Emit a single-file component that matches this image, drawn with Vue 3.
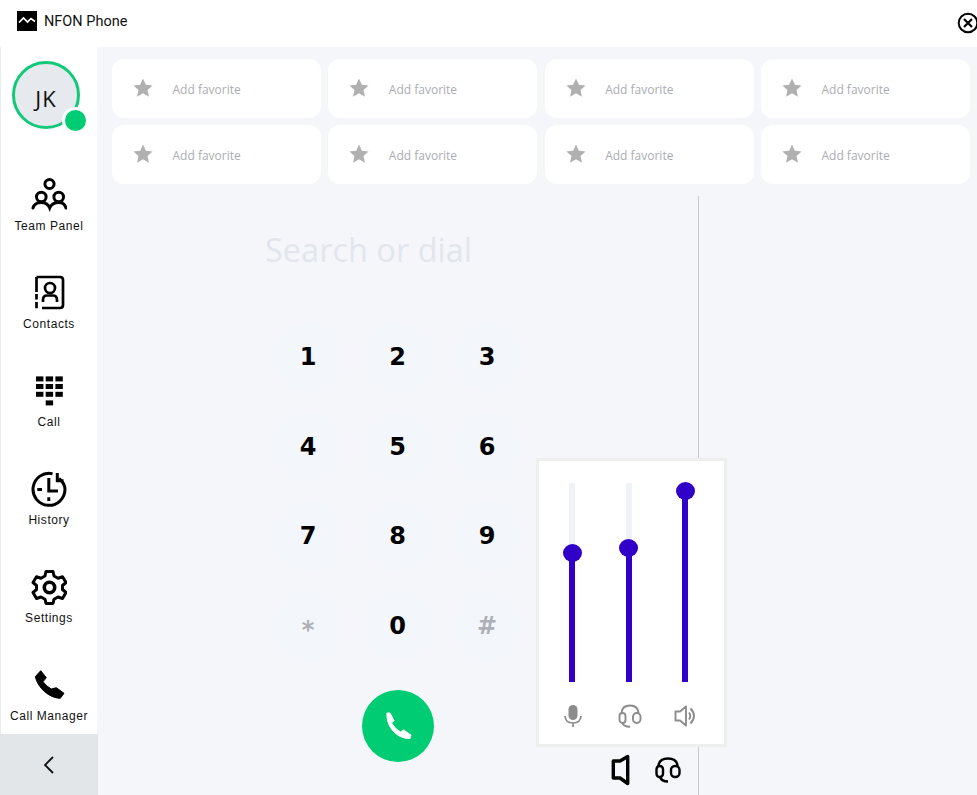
<script setup>
const favorites = Array.from({ length: 8 }, (_, i) => i)
const navItems = ['Team Panel', 'Contacts', 'Call', 'History', 'Settings', 'Call Manager']
const keys = [
  { k: '1' }, { k: '2' }, { k: '3' },
  { k: '4' }, { k: '5' }, { k: '6' },
  { k: '7' }, { k: '8' }, { k: '9' },
  { k: '*', muted: true, low: true }, { k: '0' }, { k: '#', muted: true }
]
const sliders = [
  { id: 'mic', fill: 129 },
  { id: 'head', fill: 134 },
  { id: 'spk', fill: 191 }
]
</script>

<template>
  <div class="app">
    <header class="titlebar">
      <svg class="logo" viewBox="0 0 20 20">
        <rect width="20" height="20" fill="#000" />
        <path d="M2 11.5 L6.5 7 L10.5 11 L14 7.5 L18 10.5" fill="none" stroke="#fff" stroke-width="1.7" />
      </svg>
      <span class="title">NFON Phone</span>
      <svg class="close" viewBox="0 0 22 22">
        <circle cx="11" cy="11" r="9.3" fill="none" stroke="#000" stroke-width="2" />
        <path d="M7 7 L15 15 M15 7 L7 15" stroke="#000" stroke-width="2.2" />
      </svg>
    </header>

    <div class="body">
      <aside class="sidebar">
        <div class="nav-top">
          <div class="avatar">
            <span>JK</span>
            <i class="status"></i>
          </div>
          <nav class="nav">
            <div v-for="(item, i) in navItems" :key="item" class="nav-item">
              <svg class="nav-icon" viewBox="0 0 36 36" fill="none" stroke="#000" stroke-width="3">
                <template v-if="i === 0">
                  <circle cx="18.5" cy="7" r="4.6" />
                  <circle cx="10.3" cy="20" r="4.8" />
                  <circle cx="27.7" cy="20" r="4.8" />
                  <path d="M2 31 Q3.5 25.5 10.3 25.5 Q16.5 25.5 18.7 31 Q21 25.5 27.7 25.5 Q33.5 25.5 35 31" stroke-linecap="round" />
                </template>
                <template v-else-if="i === 1">
                  <path d="M5.5 2 H29 Q32 2 32 5 V30 Q32 33 29 33 H11" stroke-width="2.7" />
                  <path d="M5.5 2 V17 M5.5 19 V24.5 M5.5 27 V33.3" stroke-width="2.7" />
                  <circle cx="19" cy="13" r="5" stroke-width="2.7" />
                  <path d="M12 27 V25 Q12 20.5 16 20.5 H22 Q26 20.5 26 25 V27" stroke-width="2.7" />
                </template>
                <template v-else-if="i === 2">
                  <g fill="#000" stroke="none">
                    <rect x="5" y="3.4" width="7.4" height="5" /><rect x="14.7" y="3.4" width="7.4" height="5" /><rect x="24.4" y="3.4" width="7.4" height="5" />
                    <rect x="5" y="11" width="7.4" height="5" /><rect x="14.7" y="11" width="7.4" height="5" /><rect x="24.4" y="11" width="7.4" height="5" />
                    <rect x="5" y="18.8" width="7.4" height="5" /><rect x="14.7" y="18.8" width="7.4" height="5" /><rect x="24.4" y="18.8" width="7.4" height="5" />
                    <rect x="14.7" y="27.4" width="7.4" height="5" />
                  </g>
                </template>
                <template v-else-if="i === 3">
                  <path d="M21.5 2.7 A16 16 0 1 0 34 18.3 Q34 12.5 28 7.5" />
                  <path d="M17.8 7 V20 H27" />
                  <path d="M6.3 18.5 H11 M17.8 26.3 V30" />
                  <path d="M26.3 2 V9.7 H32.5" />
                </template>
                <template v-else-if="i === 4">
                  <path d="M15 2.5 H22 L23 7 L27 9.2 L31.5 7.8 L35 13.5 L31.5 16.5 V20.5 L35 23.5 L31.5 29.5 L27 28 L23 30.2 L22 34.5 H15 L14 30.2 L10 28 L5.5 29.5 L2 23.5 L5.5 20.5 V16.5 L2 13.5 L5.5 7.8 L10 9.2 L14 7 Z" stroke-linejoin="round" />
                  <circle cx="18.5" cy="18.5" r="5.2" stroke-width="3.6" />
                </template>
                <template v-else>
                  <path fill="#000" stroke="#000" stroke-width="1" stroke-linejoin="round" d="M9.7 3.7 L15.3 10.7 L12 14.7 Q15.5 19.5 20.3 22 L25.3 20.7 L33 26.3 L29.3 31.3 C18 31 7 21 4.3 9.7 Z" />
                </template>
              </svg>
              <span class="nav-label">{{ item }}</span>
            </div>
          </nav>
        </div>
        <div class="collapse">
          <svg viewBox="0 0 12 20" width="12" height="20" fill="none" stroke="#111" stroke-width="1.8">
            <path d="M10 2 L2 10 L10 18" />
          </svg>
        </div>
      </aside>

      <main class="main">
        <section class="favorites">
          <div v-for="f in favorites" :key="f" class="fav">
            <svg class="star" viewBox="0 0 20 20">
              <path fill="#b0b0b0" d="M10 0.5 L12.8 6.8 L19.6 7.4 L14.5 12 L16 18.8 L10 15.3 L4 18.8 L5.5 12 L0.4 7.4 L7.2 6.8 Z" />
            </svg>
            <span class="fav-label">Add favorite</span>
          </div>
        </section>

        <section class="workspace">
          <div class="dialer">
            <div class="search">Search or dial</div>
            <div class="keypad">
              <button v-for="key in keys" :key="key.k" class="key" :class="{ muted: key.muted, low: key.low }">{{ key.k }}</button>
            </div>
            <button class="call">
              <svg viewBox="0 0 28 28" width="28" height="28">
                <path fill="#fff" stroke="#fff" stroke-width="1" stroke-linejoin="round" d="M3 1 L6 1 L10 8.5 L7.5 11 Q11 17 16.5 20 L19.5 18 L27 23 L26 26.5 C13 27 2 15 3 1 Z" />
              </svg>
            </button>
          </div>
          <div class="side-panel">
            <div class="devices">
              <svg viewBox="0 0 20 32" width="20" height="32" fill="none" stroke="#000" stroke-width="3.4">
                <path d="M16.7 2.5 V29.5 L9 24 H2.3 V7 H9 Z" stroke-linejoin="round" />
              </svg>
              <svg viewBox="0 0 26 26" width="26" height="26" fill="none" stroke="#000" stroke-width="2.4">
                <path d="M3.5 9 Q4 1.5 13 1.5 Q22 1.5 22.5 9" />
                <rect x="1.5" y="9" width="6.5" height="11" rx="3.2" />
                <rect x="16" y="9" width="8.5" height="11" rx="4" />
                <path d="M5 20 Q6.5 24.5 13 24.5" />
              </svg>
            </div>
          </div>

          <div class="volume">
            <div class="sliders">
              <div v-for="s in sliders" :key="s.id" class="track">
                <div class="fill" :style="{ height: s.fill + 'px' }"><i class="thumb"></i></div>
              </div>
            </div>
            <div class="vol-icons">
              <svg viewBox="0 0 24 24" fill="none" stroke="#8c8c8c" stroke-width="1.7">
                <rect x="7.5" y="1" width="9" height="15" rx="4.5" fill="#8c8c8c" stroke="none" />
                <path d="M4 12 Q4.5 19 12 19 Q19.5 19 20 12 M12 19 V23" />
              </svg>
              <svg viewBox="0 0 24 24" fill="none" stroke="#8c8c8c" stroke-width="1.9">
                <path d="M3.5 9 Q4 1.5 12 1.5 Q20 1.5 20.5 9" />
                <rect x="1.5" y="9" width="6" height="10" rx="3" />
                <rect x="15" y="9" width="7.5" height="10" rx="3.7" />
                <path d="M4.5 19 Q5.5 22.7 12 22.7" />
              </svg>
              <svg viewBox="0 0 24 24" fill="none" stroke="#8c8c8c" stroke-width="1.9">
                <path d="M12 2.5 V21.5 L6 16.5 H1.5 V7.5 H6 Z" stroke-linejoin="round" />
                <path d="M15 8.5 Q17.5 12 15 15.5 M16.5 4.5 Q23.5 12 16.5 19.5" />
              </svg>
            </div>
          </div>
        </section>
      </main>
    </div>
  </div>
</template>

<style>
html, body { margin: 0; background: #fff; }
</style>

<style scoped>
.app {
  width: 977px;
  height: 795px;
  overflow: hidden;
  display: flex;
  flex-direction: column;
  font-family: "Open Sans", "Liberation Sans", sans-serif;
  background: #fff;
}
.titlebar {
  height: 47px;
  flex: none;
  display: flex;
  align-items: center;
  padding: 0 0 0 17px;
  box-sizing: border-box;
  position: relative;
}
.logo { width: 20px; height: 20px; margin-top: -5px; }
.title { margin-left: 7px; margin-top: -5px; font-size: 14.5px; color: #111; font-family: Roboto, sans-serif; }
.close { position: absolute; left: 957px; top: 12px; width: 22px; height: 22px; }
.body { flex: 1; display: flex; min-height: 0; }
.sidebar {
  width: 98px;
  flex: none;
  display: flex;
  flex-direction: column;
  background: #fff;
  border-left: 1px solid #e6edf5;
  box-sizing: border-box;
}
.nav-top {
  flex: 1;
  display: flex;
  flex-direction: column;
  min-height: 0;
  border-right: 1px solid #f4f6fa;
}
.avatar {
  width: 68px;
  height: 68px;
  flex: none;
  box-sizing: border-box;
  margin: 14px 0 0 11px;
  border: 3px solid #12c97a;
  border-radius: 50%;
  background: #e6e9ed;
  display: flex;
  align-items: center;
  justify-content: center;
  padding-top: 5px;
  font-size: 22px;
  letter-spacing: 1px;
  color: #111;
  position: relative;
  font-family: "Open Sans", sans-serif;
}
.status {
  position: absolute;
  left: 50px;
  top: 46px;
  width: 21px;
  height: 21px;
  border-radius: 50%;
  background: #00cc74;
  box-shadow: 0 0 0 3px #fff;
}
.nav { display: flex; flex-direction: column; gap: 41px; margin-top: 48px; }
.nav-item {
  display: flex;
  flex-direction: column;
  align-items: center;
  color: #111;
}
.nav-icon { width: 36px; height: 36px; flex: none; }
.nav-label { margin-top: 6px; font-size: 12px; line-height: 15px; font-family: "Liberation Sans", sans-serif; letter-spacing: 0.55px; white-space: nowrap; }
.collapse {
  height: 61px;
  flex: none;
  background: #e3e6e9;
  margin-left: -1px;
  display: flex;
  align-items: center;
  justify-content: center;
}
.main { flex: 1; min-width: 0; background: #f4f6fa; display: flex; flex-direction: column; }
.favorites {
  display: grid;
  grid-template-columns: repeat(4, 209px);
  column-gap: 7.33px;
  row-gap: 7px;
  padding: 12px 0 0 14px;
}
.fav {
  height: 59px;
  background: #fff;
  border-radius: 12px;
  display: flex;
  align-items: center;
  padding-left: 21px;
  font-size: 12px;
  color: #aaadb3;
}
.star { width: 20px; height: 20px; margin-right: 19px; margin-top: -1px; }
.fav-label { margin-top: 1px; margin-left: 0.5px; }
.workspace { flex: 1; display: flex; margin-top: 12px; position: relative; min-height: 0; }
.dialer { width: 600px; flex: none; box-sizing: border-box; position: relative; }
.search {
  margin: 32px 0 0 167px;
  font-size: 32.5px;
  line-height: 44px;
  color: #e2e6ec;
  font-family: "Open Sans", sans-serif;
}
.keypad {
  display: grid;
  grid-template-columns: repeat(3, 70px);
  grid-auto-rows: 70px;
  column-gap: 19.5px;
  row-gap: 19.7px;
  margin: 50px 0 0 175px;
}
.key {
  border: 0;
  padding: 0;
  border-radius: 50%;
  background: #f3f6fa;
  font-family: "DejaVu Sans", sans-serif;
  font-weight: 700;
  font-size: 24px;
  color: #000;
}
.key.muted { color: #adb0b6; }
.key.low { padding-top: 7px; }
.call {
  display: flex;
  align-items: center;
  justify-content: center;
  width: 72px;
  height: 72px;
  margin: 29px 0 0 264px;
  padding: 0;
  border: 0;
  border-radius: 50%;
  background: #00cc74;
}
.side-panel { flex: 1; border-left: 1px solid #c9cbce; position: relative; }
.devices {
  position: absolute;
  left: -88px;
  top: 558px;
  display: flex;
  align-items: center;
  gap: 24px;
}
.volume {
  position: absolute;
  left: 438px;
  top: 262px;
  width: 191px;
  height: 289px;
  box-sizing: border-box;
  border: 3px solid #eeeeee;
  background: #fff;
  display: flex;
  flex-direction: column;
}
.sliders {
  display: flex;
  justify-content: space-between;
  padding: 22px 36px 0 30px;
}
.track {
  width: 6px;
  height: 199px;
  background: #eff2f6;
  display: flex;
  flex-direction: column;
  justify-content: flex-end;
}
.fill { background: #3000c8; position: relative; }
.thumb {
  position: absolute;
  left: -6.5px;
  top: -9px;
  width: 19px;
  height: 18px;
  border-radius: 50%;
  background: #3000c8;
}
.vol-icons {
  display: flex;
  justify-content: space-between;
  padding: 22px 26px 0 22px;
}
.vol-icons svg { width: 24px; height: 24px; }
</style>
